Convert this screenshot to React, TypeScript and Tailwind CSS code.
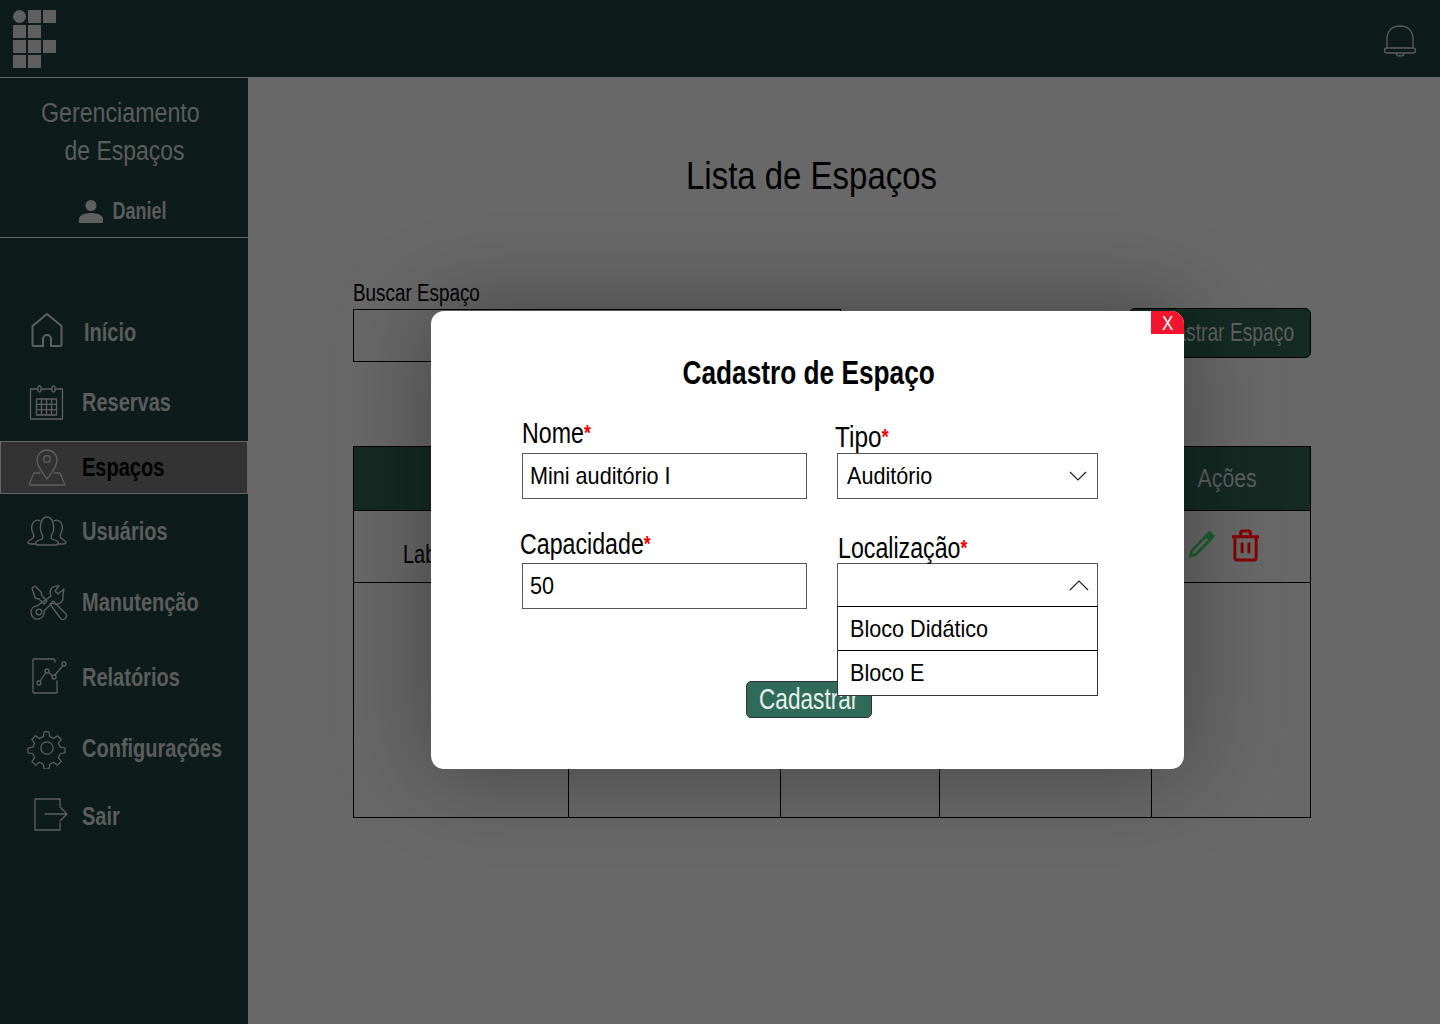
import React from "react";

const font = { fontFamily: '"Liberation Sans", Arial, sans-serif' };

const S = ({ children, className = "w-10 h-10" }: { children: React.ReactNode; className?: string }) => (
  <svg viewBox="0 0 40 40" fill="none" stroke="currentColor" strokeWidth="1.3" strokeLinejoin="round" strokeLinecap="round" className={className}>{children}</svg>
);

const icons: Record<string, React.ReactNode> = {
  home: <S><path d="M16 33v-7a4 4 0 0 1 8 0v7h9a1.500 1.500 0 0 0 1.500-1.500V13L20 1 5.500 13v18.500A1.500 1.500 0 0 0 7 33z" strokeWidth="2" /></S>,
  cal: <S>
    <path d="M3.500 6h32v30h-32z" /><rect x="11" y="3" width="3" height="6" rx="1.500" fill="#0d1c1a" /><rect x="25" y="3" width="3" height="6" rx="1.500" fill="#0d1c1a" />
    <path d="M9.500 16h20v16h-20zM9.500 21.300h20M9.500 26.600h20M14.500 16v16M19.500 16v16M24.500 16v16" />
  </S>,
  pin: <S><path d="M20 31c-4-6-10-12-10-19a10 10 0 0 1 20 0c0 7-6 13-10 19z" /><circle cx="20" cy="11" r="3.300" /><path d="M13 25H7L2 37h36l-5-12h-6" /></S>,
  users: <S>
    <path d="M11 33h18c3 0 3-3 1-4l-5-2c-1-1-1-3 0-5 2-3 2-7 1-11-1-4-3-6-6-6s-5 2-6 6c-1 4-1 8 1 11 1 2 1 4 0 5l-5 2c-2 1-2 4 1 4z" />
    <path d="M13 9c-3-2-7 0-8 4-1 3 0 6 1 8 1 2 1 4 0 5l-4 3c-2 1-1 3 2 3h5M27 9c3-2 7 0 8 4 1 3 0 6-1 8-1 2-1 4 0 5l4 3c2 1 1 3-2 3h-5" />
  </S>,
  tools: <S>
    <path d="M3 5l3-2 6 6 1 4 5 5-3 3-5-5-4-1zM21 21l3-3 13 13c2 3-2 7-5 5z" />
    <path d="M35 6l-6 5-3-3 4-5c-5-1-9 2-9 7l1 3L8 23c-4 0-6 3-6 6 0 5 4 8 8 7s6-5 5-8l8-8 3 1c5 1 9-3 8-9z" />
    <circle cx="10" cy="29" r="2.800" />
  </S>,
  report: <S>
    <g transform="translate(-2 -3)">
      <path d="M28 26v11a1 1 0 0 1-1 1H5a1 1 0 0 1-1-1V5a1 1 0 0 1 1-1h19c2 0 2 2 2 3" />
      <circle cx="10" cy="28" r="2" /><circle cx="18" cy="16" r="2" /><circle cx="25" cy="22" r="2" /><circle cx="35" cy="9" r="2" />
      <path d="M11 26l6-8.500M19.500 17.500l4 3.500M26 20l8-9.500" />
    </g>
  </S>,
  gear: <S>
    <g transform="translate(1 1) scale(0.95)">
      <circle cx="20" cy="19" r="6.500" />
      <path d="M17 2h5l1 5 4 2 4-3 4 4-3 4 2 4 5 1v5l-5 1-2 4 3 4-4 4-4-3-4 2-1 5h-5l-1-5-4-2-4 3-4-4 3-4-2-4-5-1v-5l5-1 2-4-3-4 4-4 4 3 4-2z" />
    </g>
  </S>,
  exit: <S><path d="M28 9V2H3v31h25v-7M13 17h22M28 10l7 7-7 7" /></S>,
};

const nav = [
  { label: "Início", icon: "home", h: "h-[70px]", iconX: "ml-[27px]", gap: "ml-[17px]" },
  { label: "Reservas", icon: "cal", h: "h-[70px] mb-[3px]", iconX: "ml-[27px]", gap: "ml-[15px]" },
  { label: "Espaços", icon: "pin", h: "h-[53px]", iconX: "ml-[26px]", gap: "ml-[15px]", active: true },
  { label: "Usuários", icon: "users", h: "h-[76px]", iconX: "ml-[27px]", gap: "ml-[15px]" },
  { label: "Manutenção", icon: "tools", h: "h-[66px]", iconX: "ml-[29px]", gap: "ml-[13px]" },
  { label: "Relatórios", icon: "report", h: "h-[84px]", iconX: "ml-[31px]", gap: "ml-[11px]" },
  { label: "Configurações", icon: "gear", h: "h-[58px]", iconX: "ml-[27px]", gap: "ml-[15px]" },
  { label: "Sair", icon: "exit", h: "h-[78px]", iconX: "ml-[32px]", gap: "ml-[10px]" },
];

const Star = () => <span className="text-[#f00000] text-[22px] font-bold align-[3px] leading-none">*</span>;

const Logo = () => (
  <div className="grid grid-cols-[13px_13px_13px] grid-rows-[13px_13px_13px_13px] gap-[2px]">
    <div className="rounded-full bg-[#5f5f5f]" /><div className="bg-[#5f5f5f]" /><div className="bg-[#5f5f5f]" />
    <div className="bg-[#5f5f5f]" /><div className="bg-[#5f5f5f]" /><div />
    <div className="bg-[#5f5f5f]" /><div className="bg-[#5f5f5f]" /><div className="bg-[#5f5f5f]" />
    <div className="bg-[#5f5f5f]" /><div className="bg-[#5f5f5f]" /><div />
  </div>
);

const cols = "grid grid-cols-[215px_212px_159px_212px_1fr]";
const narrowL = "inline-block whitespace-nowrap origin-left scale-x-[0.8]";
const narrowC = "inline-block whitespace-nowrap origin-center scale-x-[0.82]";
const fieldL = "inline-block whitespace-nowrap origin-left scale-x-[0.9]";

export default function App() {
  return (
    <div style={font} className="relative flex flex-col w-full h-[1024px] overflow-hidden bg-[#686868]">
      <header className="flex items-center justify-between h-[78px] shrink-0 bg-[#0d1c1a] border-b border-[#666] pl-[13px] pr-[23px]">
        <Logo />
        <svg viewBox="0 0 34 34" fill="none" stroke="#5c5c5c" strokeWidth="1.300" className="w-[34px] h-[34px] mt-[4px]">
          <path d="M4 24V15C4 7 9 2 17 2s13 5 13 13v9" />
          <rect x="1.500" y="24" width="31" height="5" rx="2.500" />
          <path d="M13 29c0 4 8 4 8 0" />
        </svg>
      </header>
      <div className="flex flex-1 min-h-0">
        <aside className="w-[248px] shrink-0 bg-[#0d1c1a] text-[#5c5c5c]">
          <div className="h-[160px] border-b border-[#666] text-center">
            <div className="pt-[16px] text-[27px] leading-[38px]">
              <span className="inline-block whitespace-nowrap scale-x-[0.86] mr-[8px]">Gerenciamento</span><br />
              <span className="inline-block whitespace-nowrap scale-x-[0.85] ml-[2px]">de Espaços</span>
            </div>
            <div className="flex items-center justify-center gap-[2px] mt-[24px] ml-[6px]">
              <svg viewBox="0 0 24 24" className="w-[24px] h-[24px] fill-[#5f5f5f]"><circle cx="12" cy="6.500" r="5.500" /><path d="M0 24v-4c0-4 6-6 12-6s12 2 12 6v4z" /></svg>
              <span className="text-[23px] font-bold inline-block whitespace-nowrap scale-x-[0.78]">Daniel</span>
            </div>
          </div>
          <nav className="mt-[60px] flex flex-col">
            {nav.map((n) => (
              <div key={n.label} className={`flex items-center ${n.h} ${n.active ? "bg-[#333333] border border-[#666] text-black" : ""}`}>
                <span className={`${n.iconX} text-[#5f5f5f]`}>{icons[n.icon]}</span>
                <span className={`${n.gap} text-[25px] font-bold ${narrowL}`}>{n.label}</span>
              </div>
            ))}
          </nav>
        </aside>
        <main className="flex-1 min-w-0 pl-[105px] pr-[129px]">
          <h1 className="mt-[74px] pr-[40px] text-center text-[39px] leading-[48px] text-black">
            <span className="inline-block whitespace-nowrap scale-x-[0.845]">Lista de Espaços</span>
          </h1>
          <div className="flex items-end justify-between mt-[80px]">
            <div>
              <div className="text-[23px] leading-[26px] h-[29px] text-black"><span className="inline-block whitespace-nowrap origin-left scale-x-[0.82]">Buscar Espaço</span></div>
              <div className="w-[488px] h-[53px] border border-black" />
            </div>
            <div className="flex items-center justify-center w-[182px] h-[50px] mb-[4px] pr-[6px] rounded-[6px] bg-[#142a23] border border-black text-[25px] text-[#5f5f5f]">
              <span className="inline-block whitespace-nowrap scale-x-[0.77]">Cadastrar Espaço</span>
            </div>
          </div>
          <div className="mt-[84px] border border-black">
            <div className={`${cols} h-[64px] bg-[#142a23] border-b border-black text-[26px] text-[#5f5f5f] items-center`}>
              <div className="text-center"><span className={narrowC}>Nome</span></div>
              <div className="text-center"><span className={narrowC}>Tipo</span></div>
              <div className="text-center"><span className={narrowC}>Capacidade</span></div>
              <div className="text-center"><span className={narrowC}>Localização</span></div>
              <div className="text-center pr-[8px]"><span className={narrowC}>Ações</span></div>
            </div>
            <div className={`${cols} h-[72px] border-b border-black text-[25px] text-black`}>
              <div className="pl-[49px] pt-[25px]"><span className={narrowL}>Laboratório</span></div><div /><div /><div />
              <div className="flex items-center gap-[15px] pl-[36px] pb-[2px]">
                <svg viewBox="0 0 28 28" className="w-[28px] h-[28px] fill-[#1a5e30] mb-[4px]"><path d="M22 1l5 5-2 3L8 26l-7 2 1-7L19 3zM18 8L5 21l-1 3 3-1L20 10z" fillRule="evenodd" /></svg>
                <svg viewBox="0 0 30 34" fill="none" stroke="#850000" strokeWidth="3" className="w-[29px] h-[33px]">
                  <path d="M1 8h28M10 7V4a2 2 0 0 1 2-2h6a2 2 0 0 1 2 2v3M4 8v22a2 2 0 0 0 2 2h18a2 2 0 0 0 2-2V8M11.500 14v11M18.500 14v11" />
                </svg>
              </div>
            </div>
            <div className={`${cols} h-[234px]`}>
              <div className="border-r border-black" /><div className="border-r border-black" /><div className="border-r border-black" /><div className="border-r border-black" /><div />
            </div>
          </div>
        </main>
      </div>

      {/* modal */}
      <div className="absolute left-[431px] top-[311px] w-[753px] h-[458px] rounded-[13px] bg-white shadow-[0_0_90px_rgba(0,0,0,0.35)] text-black">
        <div className="absolute right-0 top-0 flex items-center justify-center w-[33px] h-[23px] rounded-tr-[13px] bg-[#f5142d] text-white text-[20px]">
          <span className="inline-block scale-x-[0.85]">X</span>
        </div>
        <h2 className="pt-[42px] text-center text-[33px] leading-[40px] font-bold">
          <span className="inline-block whitespace-nowrap scale-x-[0.795] ml-[2px]">Cadastro de Espaço</span>
        </h2>
        <div className="grid grid-cols-[285px_261px] gap-x-[30px] ml-[91px] mt-[24px]">
          <div>
            <div className="text-[29px] leading-[32px] h-[32px]"><span className={narrowL}>Nome<Star /></span></div>
            <div className="flex items-center h-[46px] mt-[4px] pl-[7px] border border-[#555] text-[24px]"><span className={fieldL}>Mini auditório I</span></div>
          </div>
          <div className="pt-[4px]">
            <div className="text-[29px] leading-[32px] h-[28px] ml-[-2px]"><span className="inline-block whitespace-nowrap origin-left scale-x-[0.84]">Tipo<Star /></span></div>
            <div className="flex items-center justify-between h-[46px] mt-[4px] pl-[9px] pr-[10px] border border-[#555] text-[24px]">
              <span className={fieldL}>Auditório</span>
              <svg viewBox="0 0 18 10" fill="none" stroke="#222" strokeWidth="1.200" className="w-[18px] h-[10px]"><path d="M1 1l8 8 8-8" /></svg>
            </div>
          </div>
          <div className="mt-[32px]">
            <div className="text-[29px] leading-[26px] h-[32px] ml-[-2px]"><span className={narrowL}>Capacidade<Star /></span></div>
            <div className="flex items-center h-[46px] pl-[7px] border border-[#555] text-[24px]"><span className={fieldL}>50</span></div>
          </div>
          <div className="relative mt-[32px]">
            <div className="text-[29px] leading-[34px] h-[32px] ml-[1px]"><span className={narrowL}>Localização<Star /></span></div>
            <div className="flex items-center justify-end h-[44px] pr-[8px] border border-[#555] border-b-black">
              <svg viewBox="0 0 20 12" fill="none" stroke="#222" strokeWidth="1.200" className="w-[20px] h-[12px]"><path d="M1 11l9-9 9 9" /></svg>
            </div>
            <div className="absolute left-0 right-0 z-10 bg-white border-x border-b border-[#333] text-[24px]">
              <div className="flex items-center h-[44px] pl-[12px] border-b border-black"><span className={fieldL}>Bloco Didático</span></div>
              <div className="flex items-center h-[44px] pl-[12px]"><span className={fieldL}>Bloco E</span></div>
            </div>
          </div>
        </div>
        <div className="flex items-center justify-center w-[126px] h-[37px] ml-[315px] mt-[72px] rounded-[5px] bg-[#306a58] border border-[#333] text-[29px] text-[#e8f0ec] leading-none">
          <span className="inline-block whitespace-nowrap scale-x-[0.78]">Cadastrar</span>
        </div>
      </div>
    </div>
  );
}
